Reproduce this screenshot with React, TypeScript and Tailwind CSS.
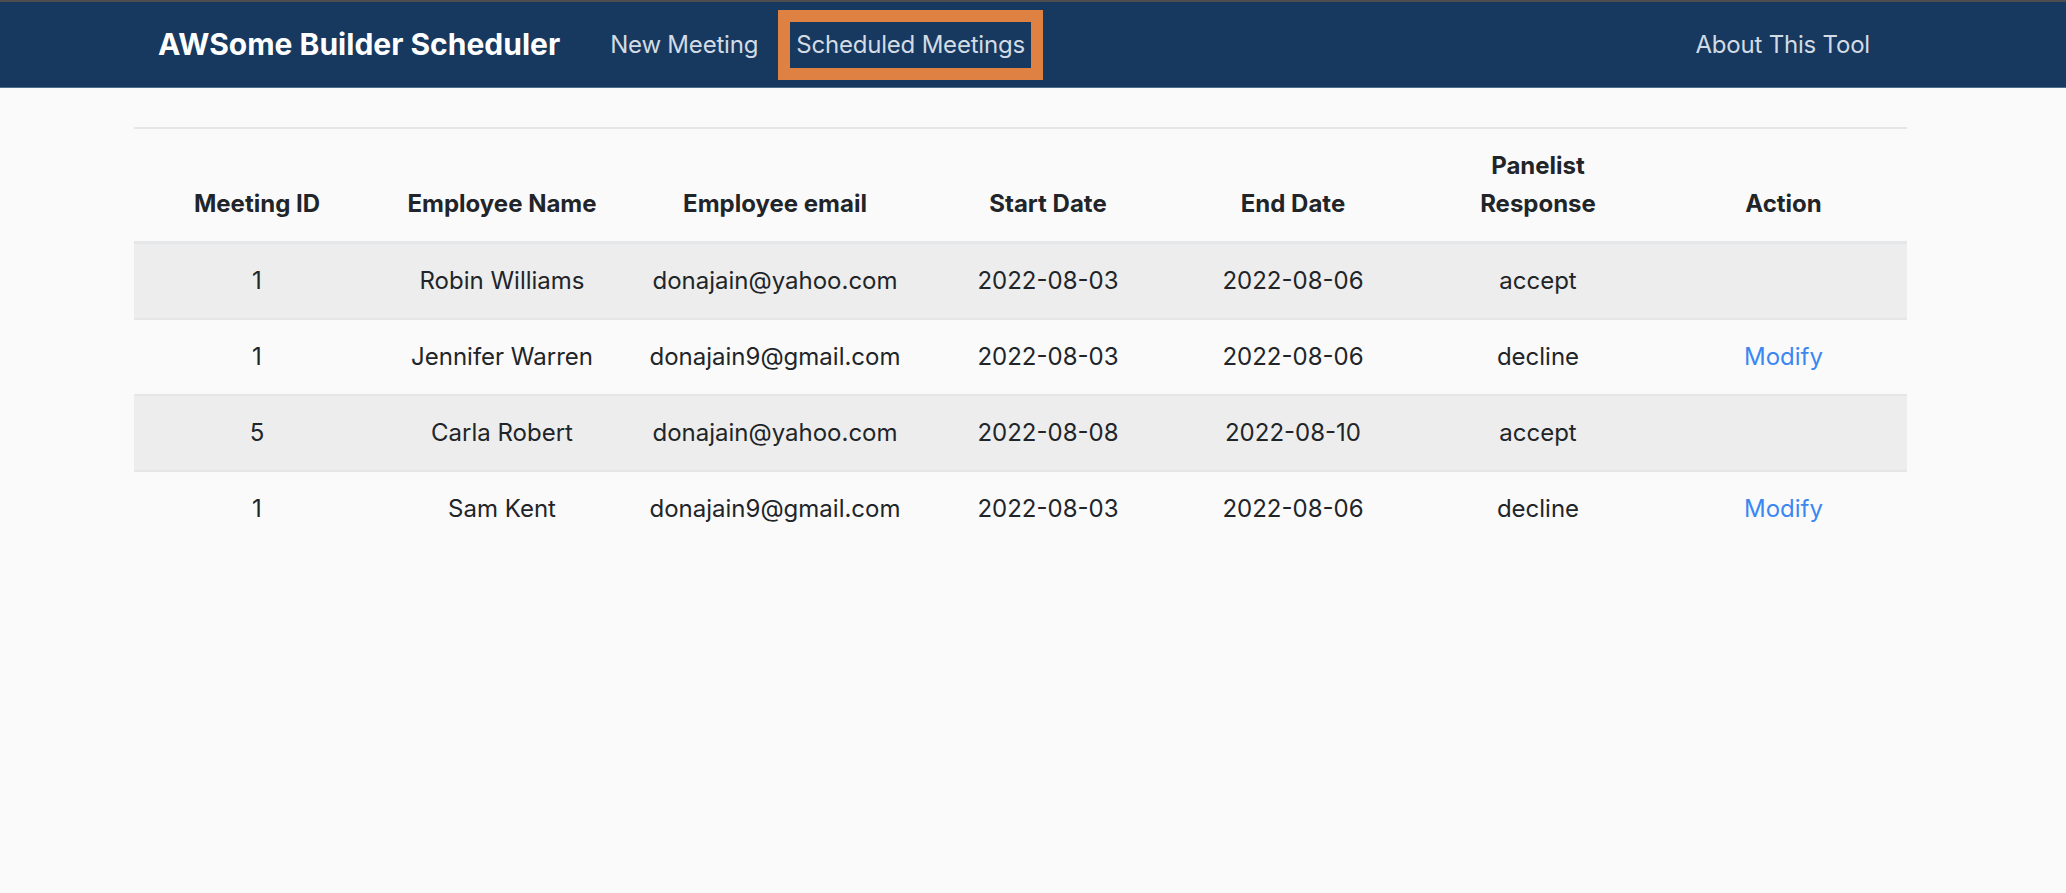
import React from 'react';

const meetings = [
  { id: 1, name: 'Robin Williams', email: 'donajain@yahoo.com', start: '2022-08-03', end: '2022-08-06', response: 'accept' },
  { id: 1, name: 'Jennifer Warren', email: 'donajain9@gmail.com', start: '2022-08-03', end: '2022-08-06', response: 'decline' },
  { id: 5, name: 'Carla Robert', email: 'donajain@yahoo.com', start: '2022-08-08', end: '2022-08-10', response: 'accept' },
  { id: 1, name: 'Sam Kent', email: 'donajain9@gmail.com', start: '2022-08-03', end: '2022-08-06', response: 'decline' },
];

export default function App() {
  return (
    <div className="min-h-[893px] bg-[#fafafa] font-['Inter','Liberation_Sans',sans-serif] text-[#212529]">
      {/* Navbar */}
      <div className="border-t-2 border-[#4d4d4d]">
        <nav className="flex h-[86px] items-center bg-[#17395f] pl-[158px] pr-[196px] border-b border-[#4e6c8c]">
          <span className="text-[30px] font-bold text-white">AWSome Builder Scheduler</span>
          <a className="ml-[50px] text-[24px] tracking-[-0.2px] text-[#d3dbe4]">New Meeting</a>
          <div className="ml-[20px] border-[12px] border-[#df8143] px-[6px] py-[5px]">
            <a className="text-[24px] tracking-[-0.2px] text-[#d3dbe4]">Scheduled Meetings</a>
          </div>
          <a className="ml-auto text-[24px] tracking-[-0.2px] text-[#d3dbe4]">About This Tool</a>
        </nav>
      </div>

      {/* Table */}
      <div className="ml-[134px] mt-[39px] w-[1773px]">
        <table className="w-full table-fixed border-collapse text-center text-[24px] leading-[38px]">
          <colgroup>
            <col className="w-[246px]" />
            <col className="w-[244px]" />
            <col className="w-[302px]" />
            <col className="w-[244px]" />
            <col className="w-[246px]" />
            <col className="w-[244px]" />
            <col className="w-[247px]" />
          </colgroup>
          <thead>
            <tr className="border-t-2 border-[#e4e6e8]">
              <th className="px-3 py-[18px] align-bottom font-bold">Meeting ID</th>
              <th className="px-3 py-[18px] align-bottom font-bold">Employee Name</th>
              <th className="px-3 py-[18px] align-bottom font-bold">Employee email</th>
              <th className="px-3 py-[18px] align-bottom font-bold">Start Date</th>
              <th className="px-3 py-[18px] align-bottom font-bold">End Date</th>
              <th className="px-[60px] py-[18px] align-bottom font-bold">Panelist Response</th>
              <th className="px-3 py-[18px] align-bottom font-bold">Action</th>
            </tr>
          </thead>
          <tbody>
            {meetings.map((m, i) => (
              <tr
                key={i}
                className={`${i === 0 ? 'border-t-[3px]' : 'border-t-2'} border-[#e4e6e8] ${i % 2 === 0 ? 'bg-[#ededed]' : ''}`}
              >
                <td className="px-3 py-[18px]">{m.id}</td>
                <td className="px-3 py-[18px]">{m.name}</td>
                <td className="px-3 py-[18px]">{m.email}</td>
                <td className="px-3 py-[18px]">{m.start}</td>
                <td className="px-3 py-[18px]">{m.end}</td>
                <td className="px-3 py-[18px]">{m.response}</td>
                <td className="px-3 py-[18px]">
                  {m.response === 'decline' && <a className="text-[#3b87f2]">Modify</a>}
                </td>
              </tr>
            ))}
          </tbody>
        </table>
      </div>
    </div>
  );
}
